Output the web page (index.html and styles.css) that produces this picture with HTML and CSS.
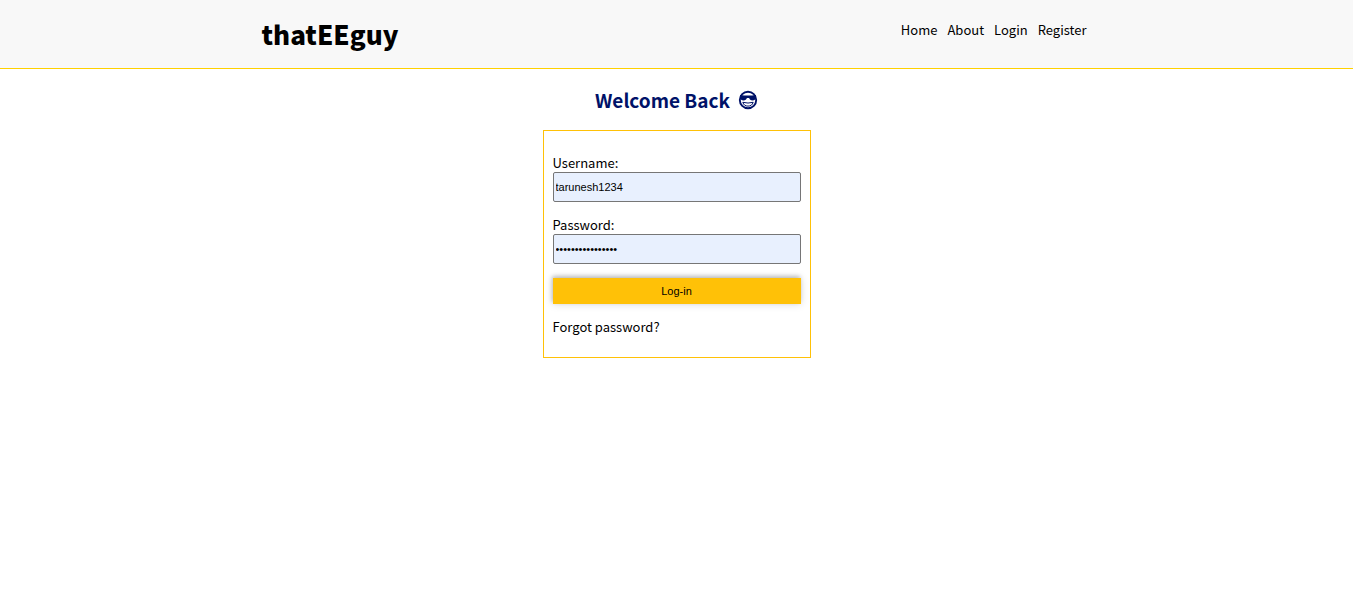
FILE: index.html
```html
<!DOCTYPE html>
<html lang="en">
<head>
  <meta charset="utf-8">
  <meta name="viewport" content="width=device-width, initial-scale=1">
  <title>thatEEguy - Login</title>
  <link rel="stylesheet" href="styles.css">
</head>
<body>
  <header class="site-header">
    <div class="header-inner">
      <h1 class="brand">thatEEguy</h1>
      <nav class="site-nav">
        <a href="#home">Home</a>
        <a href="#about">About</a>
        <a href="#login">Login</a>
        <a href="#register">Register</a>
      </nav>
    </div>
  </header>
  <main class="page">
    <h2 class="welcome">
      <span>Welcome Back</span>
      <svg class="face" viewBox="0 0 20 20" role="img" aria-label="Smiling face with sunglasses">
        <circle cx="10" cy="10" r="8.2" fill="none" stroke="currentColor" stroke-width="1.9"/>
        <path d="M2 5q8 1 16 0v2.200c-.5 2.300-1.500 3.200-3.500 3.200-1.900 0-2.900-.8-3.400-2.400h-2.200c-.5 1.600-1.500 2.400-3.400 2.400-2 0-3-.9-3.500-3.200z" fill="currentColor"/>
        <path d="M4.800 12.300q5.200 1.500 10.400 0c-.9 2.700-2.600 3.800-5.200 3.800s-4.300-1.100-5.200-3.800z" fill="#fff" stroke="currentColor" stroke-width="1"/>
      </svg>
    </h2>
    <form class="login-card">
      <div class="field">
        <label for="username">Username:</label>
        <input id="username" type="text" value="tarunesh1234" autocomplete="username">
      </div>
      <div class="field">
        <label for="password">Password:</label>
        <input id="password" type="password" value="abcdefgh12345678" autocomplete="current-password">
      </div>
      <button class="submit" type="button">Log-in</button>
      <a class="forgot" href="#forgot">Forgot password?</a>
    </form>
  </main>
</body>
</html>
```

FILE: styles.css
```css
* {
  box-sizing: border-box;
}

body {
  margin: 0;
  background: #fff;
  color: #000;
  font-family: "Noto Sans CJK SC", "Noto Sans", sans-serif;
  font-size: 13px;
  line-height: 19px;
}

a {
  color: inherit;
  text-decoration: none;
}

.site-header {
  background: #f8f8f8;
  border-bottom: 1px solid #ffd100;
}

.header-inner {
  display: flex;
  justify-content: space-between;
  align-items: flex-start;
  max-width: 830px;
  margin: 0 auto;
  padding: 14px 0;
}

.brand {
  margin: 0;
  font-size: 26px;
  font-weight: 900;
  line-height: 40px;
}

.site-nav {
  display: flex;
  gap: 10px;
  padding: 6px 5px;
}

.page {
  display: flex;
  flex-direction: column;
  align-items: center;
  padding: 16px;
}

.welcome {
  display: flex;
  align-items: center;
  gap: 8px;
  margin: 0 0 15px;
  color: #001268;
  font-size: 19px;
  font-weight: 700;
  line-height: 30px;
}

.face {
  width: 20px;
  height: 20px;
}

.login-card {
  display: flex;
  flex-direction: column;
  width: 100%;
  max-width: 268px;
  padding: 22px 9px 21px;
  border: 1px solid #ffc107;
}

.field {
  display: flex;
  flex-direction: column;
  margin-bottom: 13px;
}

.field input {
  width: 100%;
  height: 30px;
  padding: 1px 2px;
  border: 1px solid #767676;
  border-radius: 2px;
  background: #e8f0fe;
  color: #000;
  font: 11px "Liberation Sans", Arial, sans-serif;
}

.submit {
  height: 26px;
  margin-top: 1px;
  padding: 0;
  border: 0;
  background: #ffc107;
  color: #000;
  font: 11px "Liberation Sans", Arial, sans-serif;
  box-shadow: 0 0 8px rgba(0, 0, 0, 0.15), -1px -2px 4px rgba(0, 0, 0, 0.2);
}

.forgot {
  align-self: flex-start;
  margin-top: 13px;
}
```
